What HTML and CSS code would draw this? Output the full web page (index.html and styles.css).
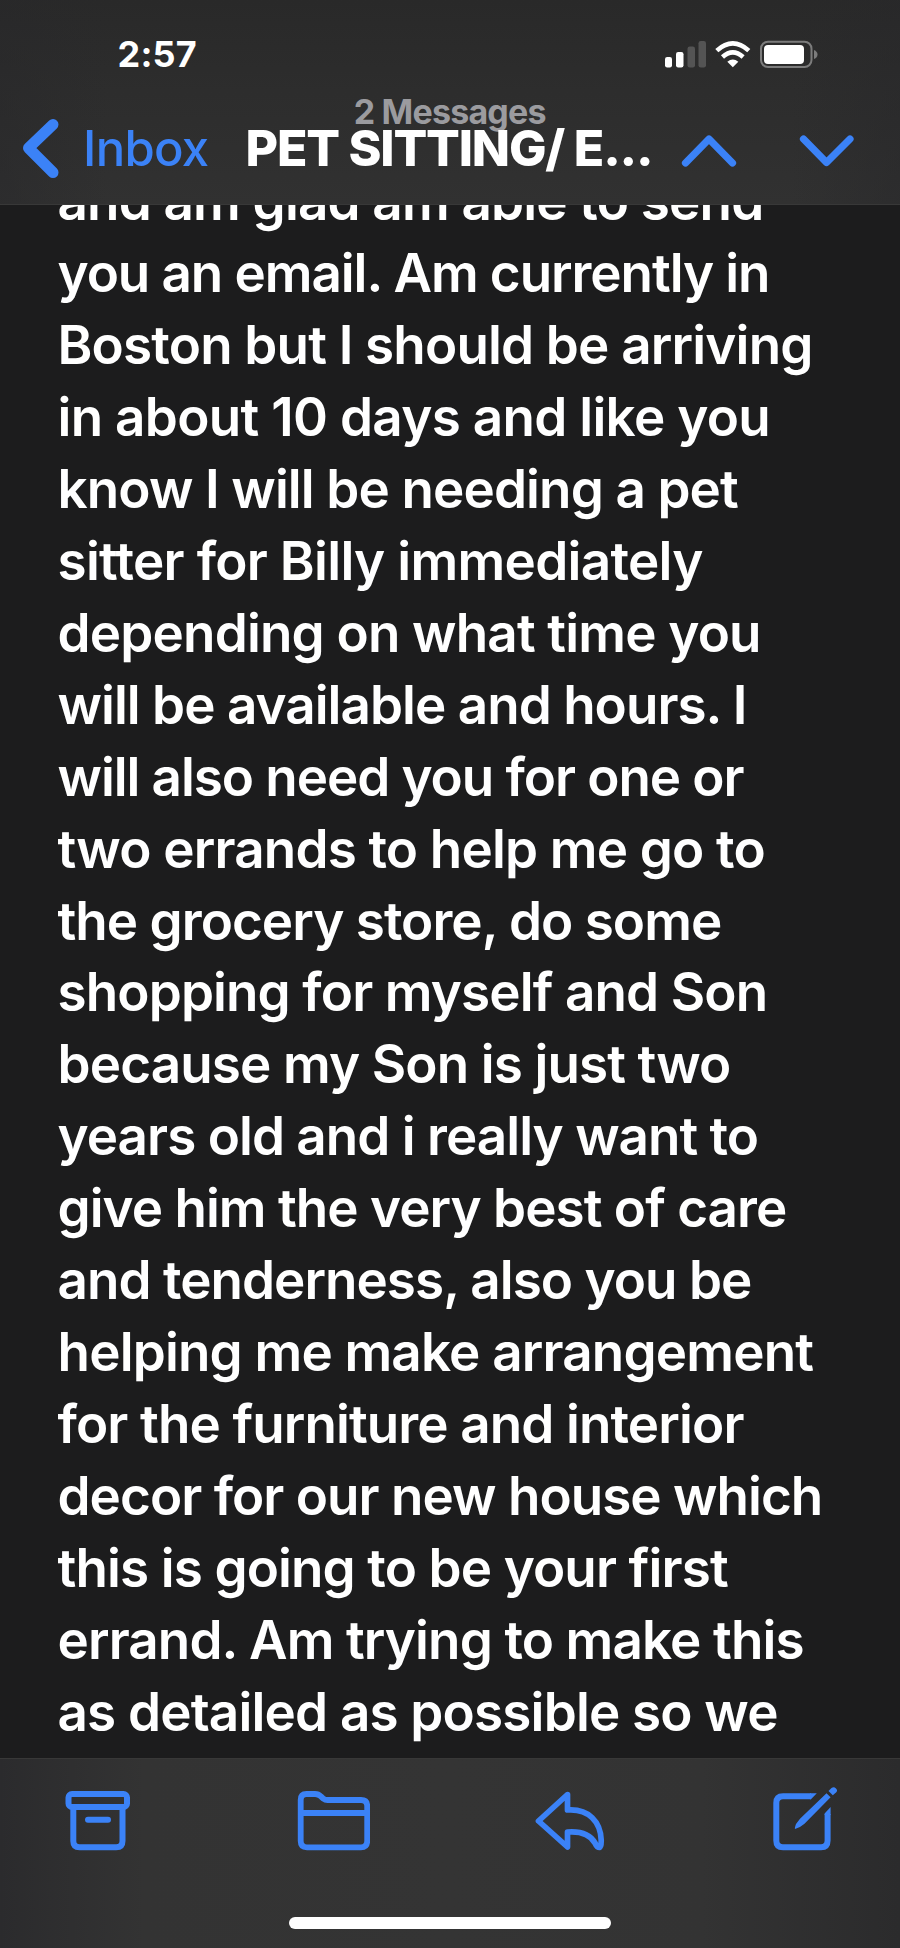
FILE: index.html
```html
<!DOCTYPE html>
<html lang="en">
<head>
<meta charset="utf-8">
<title>Mail</title>
<link rel="stylesheet" href="styles.css">
</head>
<body>
<div class="phone">
  <header class="header">
    <div class="status">
      <span class="time">2:57</span>
      <svg class="indicators" width="156" height="30" viewBox="664 40 156 30">
        <g fill="#fff">
          <rect x="665" y="57" width="7" height="10.5" rx="2.2"/>
          <rect x="676" y="52" width="7.5" height="15.5" rx="2.2"/>
          <g fill="#545454"><rect x="687.5" y="46.500" width="7.500" height="21" rx="2.2"/><rect x="698.500" y="41" width="7.500" height="26.500" rx="2.2"/></g>
          <path d="M732.8 67.200L727.300 61.700Q732.800 57.300 738.300 61.700Z"/>
        </g>
        <g fill="none" stroke="#fff" stroke-width="4.600">
          <path d="M716.800 50.600Q732.800 36.200 748.800 50.600"/>
          <path d="M722.500 57Q732.800 47.800 743.100 57"/>
        </g>
        <rect x="761" y="41.700" width="50.500" height="25.300" rx="7" fill="none" stroke="#7c7c7c" stroke-width="2"/>
        <rect x="764" y="45" width="40" height="19" rx="4" fill="#fff"/>
        <path d="M814 50Q817.500 51.500 817.500 54.500T814 59Z" fill="#7c7c7c"/>
      </svg>
    </div>
    <nav class="nav">
      <a class="back">
        <svg width="38" height="62" viewBox="22.500 117 38 62"><path d="M53.500 124.500L29 148L53.500 172.500" fill="none" stroke="#3b82f7" stroke-width="11" stroke-linecap="round" stroke-linejoin="round"/></svg>
        <span class="back-label">Inbox</span>
      </a>
      <div class="titles">
        <div class="count">2 Messages</div>
        <div class="subject">PET SITTING/ E...</div>
      </div>
      <svg class="arrows" width="174" height="34" viewBox="681 134 174 34"><path d="M685.500 163L709 139L732.500 163M803.500 139L826.500 162.500L850 139" fill="none" stroke="#3b82f7" stroke-width="7.200" stroke-linecap="round" stroke-linejoin="round"/></svg>
    </nav>
  </header>
  <main class="message">
    <div class="text">
      <div class="loose">and am glad am able to send</div>
      <div class="snug">you an email. Am currently in</div>
      <div class="loose">Boston but I should be arriving</div>
      <div class="wide">in about 10 days and like you</div>
      <div class="relaxed">know I will be needing a pet</div>
      <div class="wide">sitter for Billy immediately</div>
      <div class="loose">depending on what time you</div>
      <div>will be available and hours. I</div>
      <div class="snug">will also need you for one or</div>
      <div class="loose">two errands to help me go to</div>
      <div>the grocery store, do some</div>
      <div class="relaxed">shopping for myself and Son</div>
      <div class="relaxed">because my Son is just two</div>
      <div>years old and i really want to</div>
      <div>give him the very best of care</div>
      <div>and tenderness, also you be</div>
      <div class="loose">helping me make arrangement</div>
      <div class="relaxed">for the furniture and interior</div>
      <div>decor for our new house which</div>
      <div class="relaxed">this is going to be your first</div>
      <div class="relaxed">errand. Am trying to make this</div>
      <div class="loose">as detailed as possible so we</div>
    </div>
  </main>
  <footer class="footer">
    <div class="toolbar">
      <svg width="66" height="66" viewBox="65 1786 66 66" class="icon">
        <rect x="68.500" y="1794" width="58.500" height="13" rx="3.500"/>
        <path d="M73.300 1808V1841Q73.300 1847.300 79.600 1847.300H116.200Q122.500 1847.300 122.500 1841V1808M88 1819.700H108"/>
      </svg>
      <svg width="74" height="66" viewBox="296 1786 74 66" class="icon">
        <path d="M300.700 1800Q300.700 1794 306.500 1794H315Q318.500 1794 321 1796.500L323.500 1798.800Q325 1800 327.500 1800H361Q367.200 1800 367.200 1806V1841Q367.200 1847.300 361 1847.300H307Q300.700 1847.300 300.700 1841ZM301 1813H367" stroke-width="5.800"/>
      </svg>
      <svg width="72" height="66" viewBox="535 1786 72 66" class="icon">
        <path d="M567.500 1794.500L538.500 1821L567.500 1847V1832C581 1831 590 1834 595 1843Q597 1847.500 599.500 1847.500Q601.400 1847 601.200 1840C600.600 1822 589 1808.500 567.500 1810Z" stroke-width="5.700"/>
      </svg>
      <svg width="66" height="66" viewBox="772 1786 66 66" class="icon">
        <path d="M811 1796.300H783Q776.300 1796.300 776.300 1803V1840.500Q776.300 1847.300 783 1847.300H821Q827.600 1847.300 827.600 1840.500V1814" class="butt"/>
        <path d="M810 1793.300H816.800L811 1799.300H810ZM824.600 1815V1813.500L830.600 1807V1815Z" class="solid"/>
        <path d="M795 1829Q794.400 1828.500 796 1824L800 1818.700L826.500 1793.200L830.600 1797.300L804.500 1823.800Q800 1827.800 795 1829ZM828.500 1791L831.500 1788Q834 1786.500 836 1788.500T836.300 1792.200L832.800 1795.300Z" class="solid"/>
      </svg>
    </div>
    <div class="home"></div>
  </footer>
</div>
</body>
</html>
```
FILE: styles.css
```css
body { margin: 0; background: #1c1c1d; }
.phone {
  width: 900px;
  height: 1948px;
  display: flex;
  flex-direction: column;
  overflow: hidden;
  background: #1c1c1d;
  color: #fff;
  font-family: Inter, "Liberation Sans", sans-serif;
}
.header {
  height: 205px;
  flex: none;
  box-sizing: border-box;
  border-bottom: 1px solid #383838;
  background: linear-gradient(90deg, rgba(40,40,42,.5), transparent 12%, transparent 88%, rgba(40,40,42,.5)), linear-gradient(#292929, #2d2d2d 45%, #313131);
}
.status {
  height: 94px;
  box-sizing: border-box;
  padding: 32px 80px 0 117.5px;
  display: flex;
  justify-content: space-between;
  align-items: flex-start;
}
.time { font-size: 36px; line-height: 44px; font-weight: 700; letter-spacing: 0.2px; }
.indicators { margin-top: 8px; }
.nav { display: flex; align-items: flex-start; height: 110px; padding-left: 22px; }
.back { display: flex; width: 223.5px; color: #3b82f7; }
.back svg { margin-top: 23px; }
.back-label { margin: 25px 0 0 23px; font-size: 49px; line-height: 60px; font-weight: 500; letter-spacing: -0.7px; }
.titles { width: 408.5px; white-space: nowrap; }
.count { margin: -2px 0 0 0; text-align: center; font-size: 34px; line-height: 40px; font-weight: 700; color: #9b9b9f; letter-spacing: -0.8px; }
.subject { position: relative; margin-top: -14px; font-size: 50px; line-height: 60px; font-weight: 800; letter-spacing: -1.2px; }
.arrows { margin: 40px 0 0 27px; }
.message { height: 1553px; flex: none; overflow: hidden; }
.text { margin: -39px 0 0 57.5px; font-size: 53px; line-height: 71.95px; font-weight: 600; letter-spacing: -0.97px; white-space: nowrap; }
.snug { letter-spacing: -1.07px; }
.relaxed { letter-spacing: -0.88px; }
.loose { letter-spacing: -0.82px; }
.wide { letter-spacing: -0.69px; }
.footer {
  flex: 1;
  box-sizing: border-box;
  border-top: 1px solid #383838;
  background: linear-gradient(90deg, #2b2b2d, #333 16%, #343434 50%, #333 78%, #2b2b2c);
  display: flex;
  flex-direction: column;
  align-items: center;
}
.toolbar { width: 773px; height: 66px; margin: 27px 0 0 3px; display: flex; justify-content: space-between; }
.icon { fill: none; stroke: #3b82f7; stroke-width: 6; stroke-linecap: round; stroke-linejoin: round; }
.icon .butt { stroke-linecap: butt; }
.icon .solid { fill: #3b82f7; stroke: none; }
.home { width: 322px; height: 12px; margin-top: 65px; border-radius: 6px; background: #fff; }
```
